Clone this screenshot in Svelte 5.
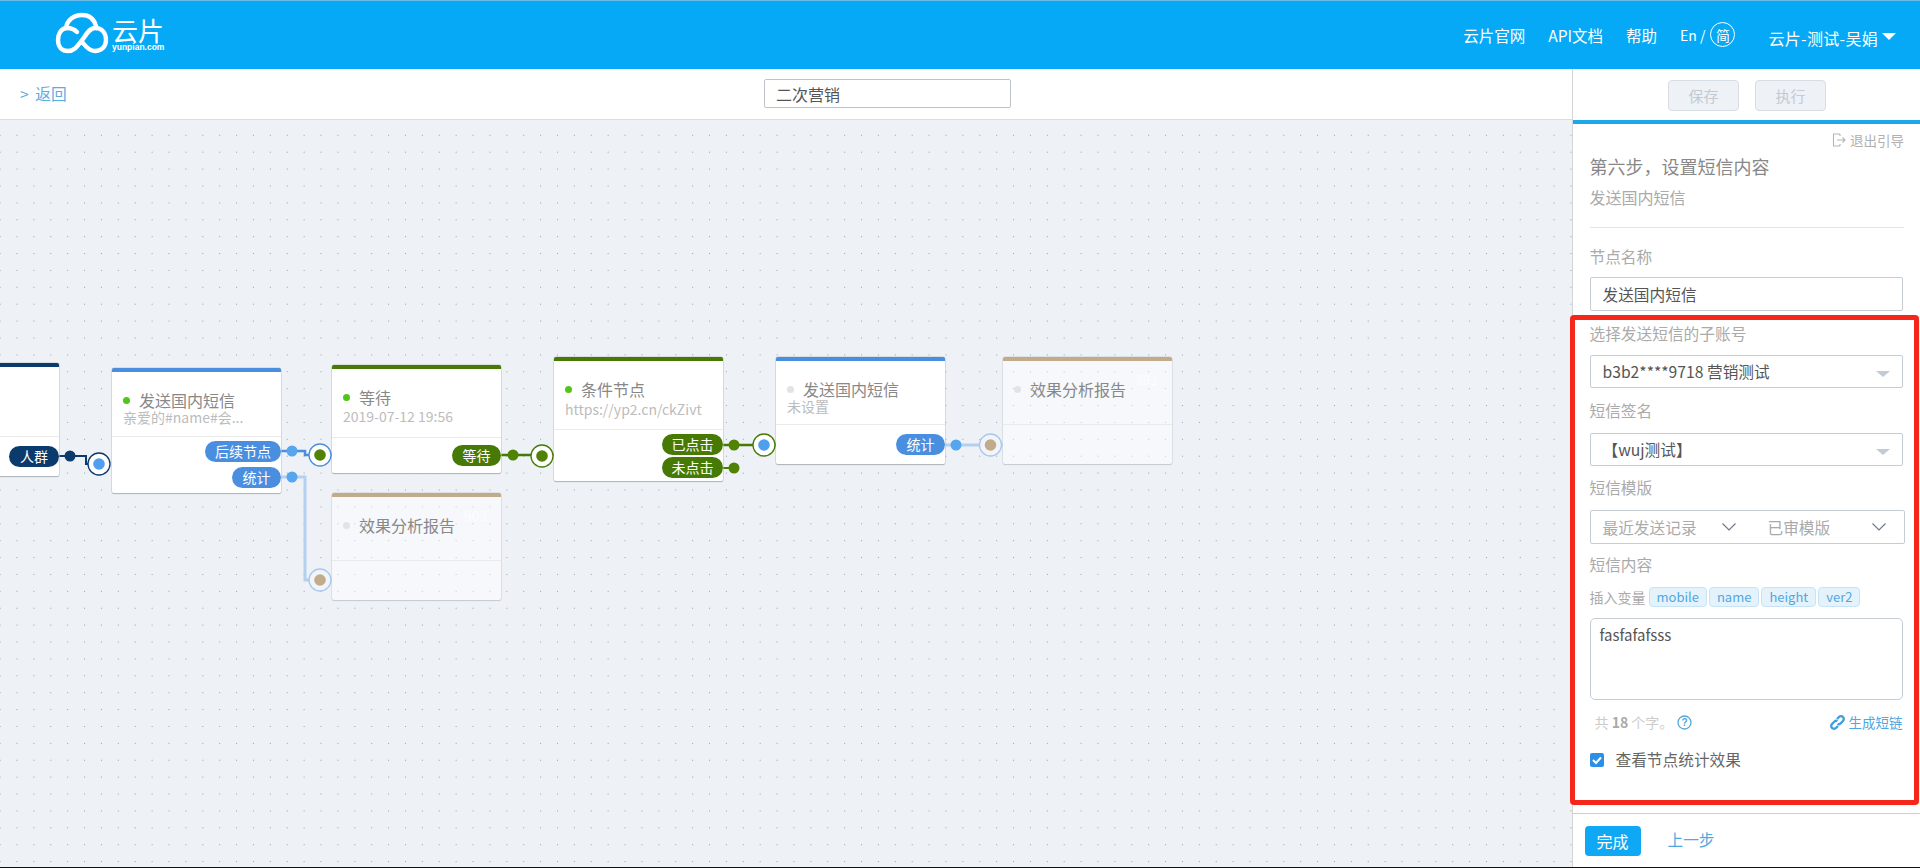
<script>
	const navy = '#0b3a6c';
	const blue = '#4a8fdf';
	const green = '#477a05';
	const tan = '#c1ab8b';

	const nodes = [
		{ x: -110, y: 363, w: 169, head: 74, foot: 39, color: navy, pills: [{ text: '人群', w: 50 }], top: 9 },
		{ x: 112, y: 368, w: 169, head: 69, foot: 56, color: blue, active: true, title: '发送国内短信', sub: '亲爱的#name#会...', pad: 19, subGap: 0, pills: [{ text: '后续节点', w: 76 }, { text: '统计', w: 49 }], top: 4, gap: 5 },
		{ x: 332, y: 365, w: 169, head: 73, foot: 35, color: green, active: true, title: '等待', sub: '2019-07-12 19:56', pad: 19, subGap: 2, pills: [{ text: '等待', w: 49 }], top: 7 },
		{ x: 332, y: 493, w: 169, head: 68, foot: 39, color: tan, report: true, title: '效果分析报告', pad: 19, num: '903' },
		{ x: 554, y: 357, w: 169, head: 73, foot: 51, color: green, active: true, title: '条件节点', sub: 'https://yp2.cn/ckZivt', pad: 19, subGap: 3, pills: [{ text: '已点击', w: 61 }, { text: '未点击', w: 61 }], top: 4, gap: 2 },
		{ x: 776, y: 357, w: 169, head: 68, foot: 39, color: blue, title: '发送国内短信', sub: '未设置', pad: 19, subGap: 0, pills: [{ text: '统计', w: 49 }], top: 9 },
		{ x: 1003, y: 357, w: 169, head: 68, foot: 39, color: tan, report: true, title: '效果分析报告', pad: 19, num: '391' }
	];

	const wires = [
		{ d: 'M59 456H86V464H99', color: navy, w: 2 },
		{ d: 'M281 451H305V455H332', color: '#4a8fdf', w: 2.500 },
		{ d: 'M281 477H305V580H332', color: '#b3d0f0', w: 3 },
		{ d: 'M501 455H554', color: green, w: 2.500 },
		{ d: 'M723 445H776', color: green, w: 2.500 },
		{ d: 'M723 468H734', color: green, w: 2 },
		{ d: 'M944 445H1003', color: '#b3d0f0', w: 3 }
	];

	const ports = [
		{ x: 99, y: 464, ring: navy, bg: '#fff', fill: '#4f9fee' },
		{ x: 320, y: 455, ring: '#4a8fdf', bg: '#fff', fill: '#4f8205' },
		{ x: 320, y: 580, ring: '#a9c8ee', bg: '#f1f4f9', fill: tan },
		{ x: 542, y: 456, ring: green, bg: '#fff', fill: '#4f8205' },
		{ x: 764, y: 445, ring: green, bg: '#fff', fill: '#4f9fee' },
		{ x: 990.5, y: 445, ring: '#a9c8ee', bg: '#f1f4f9', fill: tan }
	];

	const dots = [
		{ x: 70, y: 456, c: navy },
		{ x: 292, y: 451, c: '#56a5ef' },
		{ x: 292, y: 477, c: '#56a5ef' },
		{ x: 513, y: 455, c: '#4f8205' },
		{ x: 734, y: 445, c: '#4f8205' },
		{ x: 734, y: 468, c: '#4f8205' },
		{ x: 956, y: 445, c: '#56a5ef' }
	];

	const tags = ['mobile', 'name', 'height', 'ver2'];
</script>

<div class="app">
	<header>
		<div class="logo">
			<svg width="56" height="44" viewBox="54 11 56 44" fill="none" stroke="#fff" stroke-width="4.4" stroke-linecap="round">
				<path d="M66 28C67 20 74 15 82 15C89 15 94 19 96 26" />
				<path d="M77 32C74 29 71 28 67 28C61 28 58 34 58 40C58 47 62 51 68 51C75 51 78 45 83 39C87 33 90 28 95 28C102 28 106 33 106 40C106 47 101 51 95 51C90 51 86 47 83 43" />
			</svg>
			<div class="brand">
				<span class="brand-cn">云片</span>
				<span class="brand-en">yunpian.com</span>
			</div>
		</div>
		<nav>
			<a href="#a">云片官网</a>
			<a href="#a">API文档</a>
			<a href="#a">帮助</a>
			<span class="lang">En / <i>简</i></span>
			<span class="user">云片-测试-吴娟<b></b></span>
		</nav>
	</header>

	<div class="main">
		<div class="work">
			<div class="topbar">
				<a class="back" href="#a">&gt; 返回</a>
				<input class="title-input" value="二次营销" />
			</div>
			<div class="canvas">
				<svg class="wires" viewBox="0 120 1572 748" width="1572" height="748" fill="none">
					{#each wires as w}
						<path d={w.d} stroke={w.color} stroke-width={w.w} />
					{/each}
				</svg>
				{#each nodes as n}
					<div
						class="node"
						class:report={n.report}
						style="left:{n.x}px;top:{n.y - 120}px;width:{n.w}px;border-top-color:{n.color}"
					>
						<div class="head" style="height:{n.head - 4}px;padding-top:{n.pad}px">
							{#if n.num}<span class="num">{n.num}</span>{/if}
							{#if n.title}
								<div class="title"><i class:on={n.active}></i>{n.title}</div>
							{/if}
							{#if n.sub}
								<div class="sub" style="margin-top:{n.subGap}px">{n.sub}</div>
							{/if}
						</div>
						<div class="foot" style="height:{n.foot}px;padding-top:{n.top ?? 0}px;gap:{n.gap ?? 0}px">
							{#each n.pills ?? [] as p}
								<span class="pill" style="width:{p.w}px;background:{n.color}">{p.text}</span>
							{/each}
						</div>
					</div>
				{/each}
				<svg class="wires over" viewBox="0 120 1572 748" width="1572" height="748">
					{#each dots as d}
						<circle cx={d.x} cy={d.y} r="5.5" fill={d.c} />
					{/each}
					{#each ports as p}
						<circle cx={p.x} cy={p.y} r="11" fill={p.bg} stroke={p.ring} stroke-width="1.3" />
						<circle cx={p.x} cy={p.y} r="5.8" fill={p.fill} />
					{/each}
				</svg>
			</div>
		</div>

		<aside>
			<div class="actions">
				<button>保存</button>
				<button>执行</button>
			</div>
			<div class="body">
				<div class="exit">
					<svg width="14" height="14" viewBox="0 0 14 14" fill="none" stroke="#b5b5b5" stroke-width="1.1">
						<path d="M8 1H1.5V13H8M8 1V3M8 13V11M5 7H13M10.5 4.5L13 7L10.5 9.5" />
					</svg>
					退出引导
				</div>
				<h2>第六步，设置短信内容</h2>
				<p class="kind">发送国内短信</p>
				<hr />

				<div class="label l-name">节点名称</div>
				<input class="control c-name" value="发送国内短信" />

				<div class="label l-acct">选择发送短信的子账号</div>
				<div class="control select c-acct">b3b2****9718 营销测试<b></b></div>

				<div class="label l-sign">短信签名</div>
				<div class="control select c-sign">【wuj测试】<b></b></div>

				<div class="label l-tpl">短信模版</div>
				<div class="control c-tpl">
					<span class="opt o-a">最近发送记录
						<svg width="14" height="8" viewBox="0 0 14 8" fill="none" stroke="#6b7a8c" stroke-width="1.2"><path d="M.5 .5L7 7L13.5 .5" /></svg>
					</span>
					<span class="opt o-b">已审模版
						<svg width="14" height="8" viewBox="0 0 14 8" fill="none" stroke="#6b7a8c" stroke-width="1.2"><path d="M.5 .5L7 7L13.5 .5" /></svg>
					</span>
				</div>

				<div class="label l-text">短信内容</div>
				<div class="vars">
					<span>插入变量</span>
					{#each tags as t}
						<em>{t}</em>
					{/each}
				</div>
				<textarea class="msg">fasfafafsss</textarea>

				<div class="count">
					<span class="total">共 <strong>18</strong> 个字。</span>
					<svg class="help" width="15" height="15" viewBox="0 0 15 15" fill="none">
						<circle cx="7.5" cy="7.5" r="6.5" stroke="#4fa8e0" stroke-width="1.3" />
						<text x="7.5" y="11" text-anchor="middle" fill="#4fa8e0" font-size="10" font-weight="700" font-family="Liberation Sans, sans-serif">?</text>
					</svg>
					<a class="short" href="#a">
						<svg width="15" height="15" viewBox="0 0 15 15" fill="none" stroke="#3f9fdc" stroke-width="2.400">
							<path d="M7 4L9 2C10 1 12 1 13 2C14 3 14 5 13 6L10.500 8.500C9.500 9.500 8.500 9.500 7.500 9" />
							<path d="M8 11L6 13C5 14 3 14 2 13C1 12 1 10 2 9L4.500 6.500C5.500 5.500 6.500 5.500 7.500 6" />
						</svg>
						生成短链
					</a>
				</div>

				<label class="check">
					<span class="box">
						<svg width="14" height="14" viewBox="0 0 14 14" fill="none" stroke="#fff" stroke-width="2"><path d="M3 7L6 10L11 4.500" /></svg>
					</span>
					查看节点统计效果
				</label>
			</div>
			<div class="footer">
				<button class="done">完成</button>
				<a href="#a">上一步</a>
			</div>
			<div class="mark"></div>
		</aside>
	</div>
	<div class="edge"></div>
</div>

<style>
	:global(body) {
		margin: 0;
		background: #fff;
	}

	.app {
		height: 868px;
		display: flex;
		flex-direction: column;
		overflow: hidden;
		font-family: 'Noto Sans CJK SC', 'Noto Sans', sans-serif;
		color: #666;
		position: relative;
	}

	a {
		text-decoration: none;
	}

	header {
		height: 68px;
		flex: none;
		border-top: 1px solid #6bbce8;
		background: #05a9f6;
		display: flex;
		align-items: flex-start;
		justify-content: space-between;
		color: #fff;
	}

	.logo {
		display: flex;
		margin: 10px 0 0 54px;
	}

	.brand {
		display: flex;
		flex-direction: column;
		margin-left: 2px;
	}

	.brand-cn {
		font-size: 26px;
		line-height: 26px;
		margin-top: 6px;
	}

	.brand-en {
		font-size: 8.500px;
		line-height: 9px;
		font-weight: 700;
		font-family: 'Liberation Sans', sans-serif;
	}

	nav {
		display: flex;
		align-items: center;
		height: 68px;
		font-size: 15.500px;
		padding-right: 24px;
	}

	nav a {
		color: #fff;
		margin-right: 23px;
		margin-top: -1px;
	}

	.lang {
		display: flex;
		align-items: center;
		gap: 4px;
		font-size: 14px;
		margin-right: 33px;
		margin-top: -1px;
	}

	.lang i {
		font-style: normal;
		width: 23px;
		height: 23px;
		border: 1px solid #fff;
		border-radius: 50%;
		display: flex;
		align-items: center;
		justify-content: center;
		margin-left: 1px;
	}

	.user {
		display: flex;
		align-items: center;
		margin-top: 5px;
		font-size: 16px;
		letter-spacing: 0.300px;
	}

	.user b {
		border: 7.500px solid transparent;
		border-top: 7.500px solid #fff;
		border-bottom: 0;
		margin-left: 4px;
		margin-top: -3px;
	}

	.main {
		flex: 1;
		min-height: 0;
		display: flex;
	}

	.work {
		width: 1572px;
		flex: none;
		display: flex;
		flex-direction: column;
	}

	.topbar {
		height: 50px;
		flex: none;
		border-bottom: 1px solid #dcdcdc;
		display: flex;
		align-items: center;
		padding-left: 20px;
	}

	.back {
		width: 744px;
		flex: none;
		font-size: 15.700px;
		line-height: 24px;
		color: #5aade0;
		word-spacing: 3px;
	}

	.title-input {
		width: 247px;
		height: 29px;
		box-sizing: border-box;
		border: 1px solid #bfc4c9;
		border-radius: 2px;
		padding: 0 11px;
		margin-top: -1px;
		font: 16px 'Noto Sans CJK SC', sans-serif;
		color: #555;
	}

	.canvas {
		flex: 1;
		position: relative;
		overflow: hidden;
		background-color: #eef2f7;
		background-image: radial-gradient(circle, #98a0aa 0.7px, transparent 1px);
		background-size: 16.900px 16.900px;
		background-position: -8.350px 6.850px;
	}

	.wires {
		position: absolute;
		left: 0;
		top: 0;
	}

	.over {
		pointer-events: none;
	}

	.node {
		position: absolute;
		box-sizing: border-box;
		background: #fff;
		border-top: 4px solid;
		border-radius: 2px;
		box-shadow: 0 0 0 0.500px #c3c7cc, 0 1px 1px #9aa0a6;
	}

	.node.report {
		background: rgba(255, 255, 255, 0.45);
		box-shadow: 0 0 0 0.500px #ccd0d6, 0 1px 1px #c3c7cc;
	}

	.head {
		box-sizing: border-box;
		padding-left: 11px;
		border-bottom: 1.500px solid #eaeaea;
		position: relative;
	}

	.num {
		position: absolute;
		right: 14px;
		top: 8px;
		font-size: 14px;
		color: #fff;
		opacity: 0.85;
	}

	.title {
		font-size: 16px;
		line-height: 18px;
		color: #888;
		display: flex;
		align-items: center;
		white-space: nowrap;
	}

	.title i {
		width: 7px;
		height: 7px;
		border-radius: 50%;
		background: #e2e3e5;
		margin-right: 9px;
		flex: none;
	}

	.title i.on {
		background: #52c41a;
	}

	.sub {
		font-size: 14px;
		line-height: 16px;
		color: #bcbcbc;
		white-space: nowrap;
	}

	.foot {
		box-sizing: border-box;
		display: flex;
		flex-direction: column;
		align-items: flex-end;
	}

	.pill {
		height: 21px;
		border-radius: 11px;
		color: #fff;
		font-size: 14px;
		line-height: 21px;
		text-align: center;
		flex: none;
	}

	aside {
		width: 348px;
		flex: none;
		box-sizing: border-box;
		border-left: 1.500px solid #d5d5d5;
		display: flex;
		flex-direction: column;
		position: relative;
	}

	.actions {
		height: 51px;
		flex: none;
		box-sizing: border-box;
		padding: 11px 0 0 95px;
		display: flex;
		gap: 16px;
	}

	.actions button {
		width: 71px;
		height: 31px;
		box-sizing: border-box;
		background: #eef1f6;
		border: 1px solid #d7dde5;
		border-radius: 4px;
		font: 15px 'Noto Sans CJK SC', sans-serif;
		color: #c2cad3;
		padding: 0;
	}

	.body {
		flex: 1;
		border-top: 4px solid #1ea7e8;
		padding: 0 16px 0 16.500px;
		min-height: 0;
	}

	.exit {
		height: 30px;
		display: flex;
		align-items: center;
		justify-content: flex-end;
		gap: 4px;
		font-size: 13.500px;
		color: #b0b0b0;
		padding-top: 2px;
		box-sizing: border-box;
	}

	h2 {
		margin: 0;
		font-size: 18px;
		font-weight: 400;
		line-height: 24px;
		color: #888;
		white-space: nowrap;
	}

	.kind {
		margin: 9px 0 0;
		font-size: 16px;
		line-height: 20px;
		color: #aaa;
	}

	hr {
		margin: 20px 0 0;
		border: 0;
		border-top: 1px solid #e3e3e3;
	}

	.label {
		font-size: 15.700px;
		line-height: 20px;
		color: #aaa;
		white-space: nowrap;
	}

	.l-name {
		margin-top: 19px;
	}

	.l-acct {
		margin-top: 13px;
	}

	.l-sign {
		margin-top: 13px;
	}

	.l-tpl {
		margin-top: 12px;
	}

	.l-text {
		margin-top: 11px;
	}

	.control {
		box-sizing: border-box;
		display: block;
		width: 313px;
		border: 1px solid #c5ccd4;
		border-radius: 2px;
		padding: 0 12px;
		font: 15.700px 'Noto Sans CJK SC', sans-serif;
		color: #555;
		background: #fff;
	}

	.c-name {
		height: 34px;
		margin-top: 10px;
	}

	.select {
		height: 33px;
		line-height: 31px;
		position: relative;
	}

	.c-acct {
		margin-top: 11px;
	}

	.c-sign {
		margin-top: 12px;
	}

	.select b {
		position: absolute;
		right: 12px;
		top: 15px;
		border: 7px solid transparent;
		border-top: 6px solid #c2cad8;
		border-bottom: 0;
	}

	.c-tpl {
		width: 315px;
		height: 34px;
		margin-top: 12px;
		display: flex;
		align-items: center;
		color: #aaa;
	}

	.opt {
		display: flex;
		align-items: center;
		white-space: nowrap;
	}

	.o-a {
		gap: 25px;
		width: 165px;
	}

	.o-b {
		gap: 42px;
	}

	.vars {
		margin-top: 12px;
		height: 20px;
		display: flex;
		align-items: center;
		gap: 2px;
		font-size: 14px;
		color: #aaa;
	}

	.vars span {
		width: 57px;
		white-space: nowrap;
	}

	.vars em {
		font-style: normal;
		height: 20px;
		box-sizing: border-box;
		padding: 0 7px;
		font-size: 13px;
		line-height: 17px;
		background: #e4f2fc;
		border: 1px solid #c8e3f6;
		border-radius: 4px;
		color: #4fa8e0;
	}

	.msg {
		display: block;
		box-sizing: border-box;
		width: 313px;
		height: 82px;
		margin-top: 11px;
		padding: 5px 9px;
		border: 1px solid #c5ccd4;
		border-radius: 5px;
		font: 15px 'Noto Sans CJK SC', sans-serif;
		color: #555;
		resize: none;
	}

	.count {
		margin-top: 12px;
		height: 20px;
		width: 313px;
		display: flex;
		align-items: center;
		font-size: 14px;
		color: #ccc;
	}

	.total {
		margin-left: 5px;
		white-space: nowrap;
	}

	.total strong {
		color: #aaa;
	}

	.help {
		margin-left: 4px;
	}

	.short {
		margin-left: auto;
		display: flex;
		align-items: center;
		gap: 4px;
		font-size: 13.500px;
		color: #4fa8e0;
	}

	.check {
		margin-top: 17px;
		display: flex;
		align-items: center;
		gap: 12px;
		font-size: 15.700px;
		line-height: 21px;
		color: #666;
	}

	.box {
		width: 14px;
		height: 14px;
		border-radius: 2px;
		background: #2b8fe8;
		display: flex;
	}

	.footer {
		height: 53px;
		flex: none;
		box-sizing: border-box;
		border-top: 1px solid #cfcfcf;
		display: flex;
		align-items: flex-start;
		padding: 12px 0 0 11.500px;
		gap: 27px;
		margin-bottom: 2px;
	}

	.done {
		width: 56px;
		height: 30px;
		background: #0ea8f5;
		border: 0;
		border-radius: 4px;
		color: #fff;
		font: 16px 'Noto Sans CJK SC', sans-serif;
		padding: 0;
	}

	.footer a {
		font-size: 15.700px;
		line-height: 28px;
		color: #4fa8e0;
	}

	.mark {
		position: absolute;
		left: -3px;
		top: 246px;
		width: 349px;
		height: 490px;
		box-sizing: border-box;
		border: 5px solid #f5261a;
		border-radius: 4px;
		pointer-events: none;
	}

	.edge {
		position: absolute;
		left: 0;
		right: 0;
		bottom: 0;
		height: 1.500px;
		background: #111;
	}
</style>
